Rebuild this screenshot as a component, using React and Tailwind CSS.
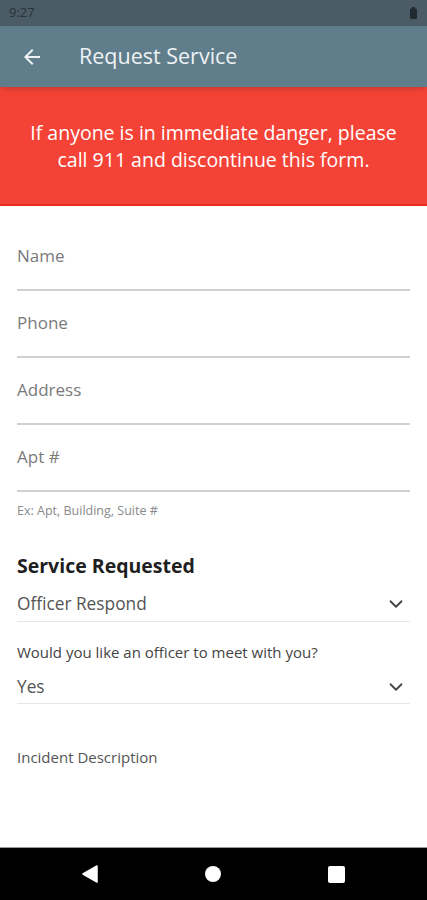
import { ChevronDown } from 'lucide-react';

const FIELDS = ['Name', 'Phone', 'Address', 'Apt #'];

export default function App() {
  return (
    <div className="h-[900px] w-full flex flex-col bg-white overflow-hidden" style={{ fontFamily: '"Open Sans", sans-serif' }}>
      {/* status bar */}
      <div className="h-[26px] bg-[#4b5c66] flex items-center justify-between px-[9px] shrink-0">
        <span className="text-[13px] text-[#26343b]">9:27</span>
        <svg width="7" height="12" viewBox="0 0 7 12" className="mr-[1px]">
          <rect x="2" y="0" width="3" height="2" fill="#1f2b31" />
          <rect x="0" y="1.5" width="7" height="10.5" rx="1" fill="#1f2b31" />
        </svg>
      </div>

      {/* app bar */}
      <div className="h-[61px] bg-[#607d8b] flex items-center shrink-0 shadow-md z-10">
        <svg width="24" height="24" viewBox="0 0 24 24" className="ml-[20px]">
          <path d="M20 11H7.83l5.59-5.59L12 4l-8 8 8 8 1.41-1.41L7.83 13H20v-2z" fill="#eef2f4" />
        </svg>
        <span className="ml-[35px] text-[21.5px] text-[#eef2f4]">Request Service</span>
      </div>

      {/* emergency banner */}
      <div className="h-[119px] bg-[#f44336] border-b-2 border-[#ea2c1f] flex items-center justify-center px-[26px] shrink-0">
        <p className="text-center text-white text-[19.5px] leading-[27px] mt-[1px]">
          If anyone is in immediate danger, please call 911 and discontinue this form.
        </p>
      </div>

      {/* form */}
      <div className="flex-1 px-[17px] pt-[18px]">
        {FIELDS.map(f => (
          <div key={f} className="h-[67px] flex items-center border-b-2 border-[#d0d0d0]">
            <span className="text-[17px] text-[#7a7a7a] -mt-[1px]">{f}</span>
          </div>
        ))}
        <p className="text-[12.5px] text-[#8a8a8a] mt-[11px] leading-[16px]">Ex: Apt, Building, Suite #</p>

        <h2 className="mt-[34px] text-[19.5px] font-bold text-[#1f1f1f] leading-[26px]">Service Requested</h2>

        <div className="mt-[7px] h-[36px] flex items-center justify-between border-b border-[#e6e6e6]">
          <span className="text-[17.3px] text-[#555]">Officer Respond</span>
          <ChevronDown size={22} strokeWidth={2} className="text-[#444] mr-[3px]" />
        </div>

        <p className="mt-[19px] text-[15px] text-[#444] leading-[22px]">Would you like an officer to meet with you?</p>

        <div className="mt-[7px] h-[34px] flex items-center justify-between border-b border-[#e6e6e6]">
          <span className="text-[17.3px] text-[#555]">Yes</span>
          <ChevronDown size={22} strokeWidth={2} className="text-[#444] mr-[3px]" />
        </div>

        <p className="mt-[42px] text-[15px] text-[#555] leading-[22px]">Incident Description</p>
      </div>

      {/* nav bar */}
      <div className="h-[53px] bg-black border-t border-[#9a9a9a] flex items-center justify-center gap-[107px] shrink-0">
        <svg width="16" height="18" viewBox="0 0 16 18"><path d="M15 1v16L1 9z" fill="white" stroke="white" strokeWidth="1.5" strokeLinejoin="round" /></svg>
        <div className="w-[16px] h-[16px] rounded-full bg-white" />
        <div className="w-[17px] h-[17px] rounded-[2px] bg-white" />
      </div>
    </div>
  );
}
